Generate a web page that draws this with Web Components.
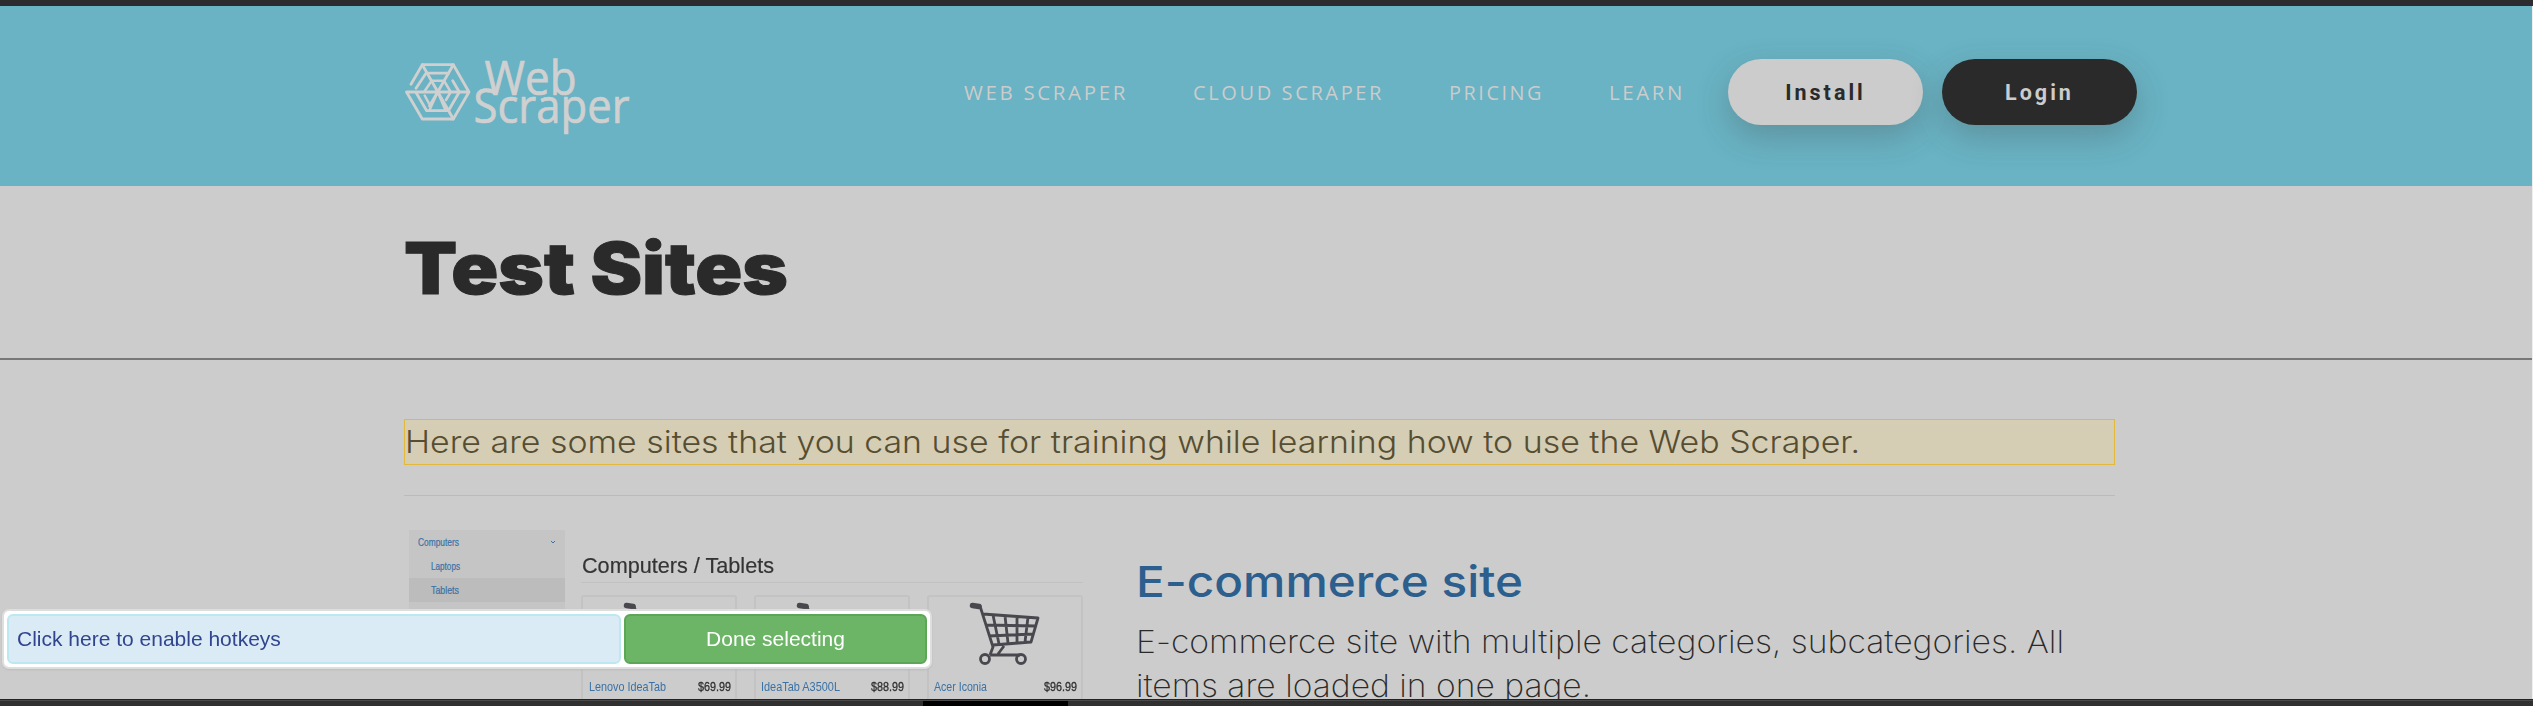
<!DOCTYPE html>
<html lang="en"><head><meta charset="utf-8"><title>Test Sites</title>
<style>html,body{margin:0;height:706px;overflow:hidden;background:#ccc}</style></head>
<body><test-sites-page></test-sites-page>
<script>
const define=(name,html)=>customElements.define(name,class extends HTMLElement{
  constructor(){super();this.attachShadow({mode:'open'}).innerHTML=html}
});

/* One line of text whose glyphs are fitted to a given width. */
customElements.define('fit-text',class extends HTMLElement{
  connectedCallback(){
    const a=k=>this.getAttribute(k);
    const root=this.attachShadow({mode:'open'});
    const w=+a('w'),h=+a('h'),x=+(a('x')||0);
    root.innerHTML=`<style>:host{display:block;flex:none;width:${w}px;height:${h}px}svg{display:block;overflow:visible}text{fill:currentColor;stroke:currentColor;stroke-width:${a('stroke')||0};font:inherit;letter-spacing:inherit}</style><svg width="${w}" height="${h}"><text x="${x}" y="${a('base')}" textLength="${w}" lengthAdjust="spacingAndGlyphs"></text></svg>`;
    root.querySelector('text').textContent=this.textContent;
  }
});

define('site-logo',`<style>:host{display:block;flex:none;width:235px;height:90px}svg{display:block;overflow:visible}
text{font-family:"Open Sans",sans-serif;font-size:47px;fill:#d0d0d0;stroke:#d0d0d0;stroke-width:.7}</style>
<svg width="235" height="90" viewBox="0 0 235 90">
<g fill="none" stroke="#d0d0d0" stroke-width="2.8" stroke-linecap="round" stroke-linejoin="round">
<path d="M7 35.300L18.300 15.700H49.300L65 43L49.300 70H18.300L2.500 43H65"/>
<path d="M18.300 15.700L49.300 70M49.300 15.700L33.700 43L25.500 57"/>
<path d="M12 39.300L22 24.200H44.300M48.700 31.700L55.300 43L45.300 60.300M45 61.700H22.700L12 43.500"/>
<path d="M20.700 42L27.700 31.700H40L46.700 43L42 51M25.300 55L20.700 46.500M33.700 43L41 60M33.700 43L26 60" stroke-width="2.500"/></g>
<text x="80.500" y="45.500" textLength="92" lengthAdjust="spacingAndGlyphs">Web</text>
<text x="69.500" y="74" textLength="156" lengthAdjust="spacingAndGlyphs">Scraper</text></svg>`);

define('pill-button',`<style>:host{display:flex;flex:none;align-items:center;justify-content:center;box-sizing:border-box;width:195px;height:66px;border-radius:33px;background:#ccc;color:#2a2a2a;font:700 21.500px Roboto,sans-serif;letter-spacing:3px;box-shadow:0 12px 32px rgba(70,70,70,.3)}
:host([dark]){background:#2a2a2a;color:#ccc}</style><slot></slot>`);

define('site-header',`<style>:host{display:flex;box-sizing:border-box;height:186px;border-top:6px solid #2c2c2e;background:#69b3c4;padding-left:404px;align-items:flex-start}
site-logo{margin-top:43px}
nav{display:flex;gap:65px;margin:68px 0 0 326px;color:#ccc;font-family:"Open Sans",sans-serif;font-size:20px;letter-spacing:2.6px}
.buttons{display:flex;gap:19px;margin:53px 0 0 42px}</style>
<site-logo></site-logo><nav><fit-text w="164" h="40" x="-1" base="26">WEB SCRAPER</fit-text><fit-text w="191" h="40" x="-1" base="26">CLOUD SCRAPER</fit-text><fit-text w="95" h="40" x="-1" base="26">PRICING</fit-text><fit-text w="76" h="40" x="-1" base="26">LEARN</fit-text></nav>
<div class="buttons"><pill-button>Install</pill-button><pill-button dark>Login</pill-button></div>`);

define('shopping-cart',`<style>:host{display:block}svg{display:block;margin:auto}</style>
<svg width="74" height="64" viewBox="0 0 74 64" fill="none" stroke="#48484e" stroke-width="2.8" stroke-linejoin="round">
<path d="M4.500 3.500L11 4.500" stroke-width="5.500" stroke-linecap="round"/>
<path d="M12 4L25 45L22 53M15 12L70 16L63 40L25 43M18 23L67 24M21 34L65 32M25 13L31 42M37 14L40 41M49 14L49 41M60 15L57 40M36 44L30 52M22 53H52"/>
<circle cx="17" cy="57" r="4.500"/><circle cx="53" cy="57" r="4.500"/></svg>`);

define('product-card',`<style>:host{display:flex;flex-direction:column;box-sizing:border-box;width:156px;height:120px;flex:none;border:2px solid #c3c3c3;border-bottom:0;border-radius:3px 3px 0 0;padding:5px 5px 0;font:12.6px "Liberation Sans",sans-serif}
shopping-cart{height:64px}.row{display:flex;justify-content:space-between;margin-top:11px;color:#303030}.name{color:#3a72a5}</style>
<shopping-cart></shopping-cart><div class="row"><span class="name"><slot name="name"></slot></span><slot name="price"></slot></div>`);

define('shop-preview',`<style>:host{display:flex;width:680px;height:169px;flex:none;font-family:"Liberation Sans",sans-serif;gap:16px;filter:blur(.5px)}
.side{width:156px;height:96px;margin:0 0 0 5px;background:#c5c5c5;color:#3a72a5;font-size:10px}
.side div{display:flex;justify-content:space-between;height:24px;align-items:center;padding:0 9px}
.side .sub{padding-left:22px}.side .on{background:#bcbcbc}
.main{width:502px}.title{color:#343434;font-size:22px}.rule{height:1px;background:#c1c1c1;margin:0 0 12px}
.cards{display:flex;gap:17px}</style>
<div class="side"><div><fit-text w="41" h="24" base="15.500" stroke=".2">Computers</fit-text><svg width="6" height="4" fill="none" stroke="#3a72a5"><path d="M1 1L3 3L5 1"/></svg></div><div class="sub"><fit-text w="29" h="24" base="15.500" stroke=".2">Laptops</fit-text></div><div class="sub on"><fit-text w="28" h="24" base="15.500" stroke=".2">Tablets</fit-text></div></div>
<div class="main"><div class="title"><fit-text w="192" h="52" x="1" base="43" stroke=".2">Computers / Tablets</fit-text></div><div class="rule"></div>
<div class="cards"><product-card><fit-text slot="name" w="77" h="16" x="1" base="14">Lenovo IdeaTab</fit-text><fit-text slot="price" w="33" h="16" x="1" base="14" stroke=".3">$69.99</fit-text></product-card>
<product-card><fit-text slot="name" w="79" h="16" base="14">IdeaTab A3500L</fit-text><fit-text slot="price" w="33" h="16" x="1" base="14" stroke=".3">$88.99</fit-text></product-card>
<product-card><fit-text slot="name" w="53" h="16" base="14">Acer Iconia</fit-text><fit-text slot="price" w="33" h="16" x="1" base="14" stroke=".3">$96.99</fit-text></product-card></div></div>`);

define('selector-toolbar',`<style>:host{position:absolute;left:2px;top:609px;width:930px;height:60px;box-sizing:border-box;display:flex;gap:3px;padding:3px;background:#fff;border:2px solid #dedede;border-radius:7px;box-shadow:0 1px 2px #bbb;font:21px "Liberation Sans",sans-serif}
div{box-sizing:border-box;display:flex;align-items:center;border:2px solid;border-radius:6px;height:50px}
.hot{width:614px;background:#dbebf6;border-color:#bce8f1;color:#31458f;padding-left:8px}
.done{width:303px;background:#6cb466;border-color:#5ba755;color:#fff;justify-content:center}</style>
<div class="hot">Click here to enable hotkeys</div><div class="done">Done selecting</div>`);

define('test-sites-page',`<style>:host{display:flex;flex-direction:column;position:relative;width:2533px;height:706px;overflow:hidden;background:#ccc;color:#2a2a2a;box-sizing:border-box}
.title{height:172px;border-bottom:2px solid #777;font:900 71px Inter,sans-serif;padding-left:404px}
.content{width:1711px;margin-left:404px;flex:none;height:339px;overflow:hidden}
.picked{box-sizing:border-box;margin-top:59px;height:46px;border:1px solid #e2b93b;background:#d5cdb4;color:#564d32;font:350 31px Inter,sans-serif}
.rule{height:1px;background:#bbb;margin:30px 0 34px}
.entry{display:flex;height:170px}.copy{margin-left:52px}
.h{color:#2c5f8e;font:460 43px Inter,sans-serif}.p{font:200 31.500px Inter,sans-serif}
.bottom{height:7px;box-sizing:border-box;border-top:1px solid #222;background:linear-gradient(#4a4a4a 1px,#303030 1px);display:flex}.bottom i{width:145px;height:5px;margin:1px 0 0 923px;background:#000}
.edge{position:absolute;right:0;top:6px;width:1px;height:693px;background:#eee}</style>
<site-header></site-header>
<div class="title"><fit-text w="384" h="172" base="108" stroke="1">Test Sites</fit-text></div>
<div class="content"><div class="picked"><fit-text w="1455" h="44" base="33">Here are some sites that you can use for training while learning how to use the Web Scraper.</fit-text></div>
<div class="rule"></div><div class="entry"><shop-preview></shop-preview><div class="copy"><div class="h"><fit-text w="387" h="86" base="67">E-commerce site</fit-text></div><div class="p"><fit-text w="928" h="44" base="37">E-commerce site with multiple categories, subcategories. All</fit-text><fit-text w="455" h="39" base="37">items are loaded in one page.</fit-text></div></div></div></div>
<div class="bottom"><i></i></div><div class="edge"></div>
<selector-toolbar></selector-toolbar>`);
</script></body></html>
